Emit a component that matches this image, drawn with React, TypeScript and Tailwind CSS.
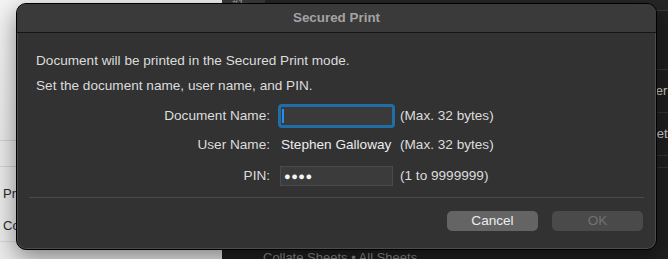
import React from 'react';

const font = { fontFamily: '"Liberation Sans", Arial, sans-serif' };

const Row: React.FC<{ label: string; hint: string; children: React.ReactNode }> = ({ label, hint, children }) => (
  <div className="flex h-[24px] items-center">
    <div className="w-[235px] pr-[1px] text-right text-[13.6px] text-[#dcdcdc]">{label}</div>
    <div className="ml-[9px] w-[113px]">{children}</div>
    <div className="ml-[7px] text-[13.6px] text-[#dcdcdc]">{hint}</div>
  </div>
);

export default function App() {
  return (
    <div className="relative h-[259px] w-[668px] overflow-hidden" style={font}>
      {/* windows behind the sheet */}
      <div className="flex h-full w-full">
        <div className="flex w-[222px] shrink-0 flex-col bg-[#ebebeb] text-[13px] text-[#2a2a2a]">
          <div className="h-[140px] shrink-0 bg-gradient-to-b from-[#f4f4f4] to-[#e9e9e9]" />
          <div className="h-[26px] shrink-0 border-t border-[#d2d2d2]" />
          <div className="flex h-[44px] shrink-0 items-center border-t border-[#d2d2d2] pl-[3px] pt-[10px]">Printer</div>
          <div className="flex h-[31px] shrink-0 items-center pl-[3px]">Copies</div>
          <div className="flex-1 border-t border-[#d6d6d6]" />
        </div>
        <div className="flex min-w-0 flex-1 flex-col overflow-hidden whitespace-nowrap bg-[#1f1f1f] text-[13px] text-[#cfcfcf]">
          <div className="flex h-[11px] shrink-0 border-b border-[#3a3a3a]">
            <div className="w-[43px] bg-[#3b3b3b] pl-[10px] text-[11px] leading-[6px] text-[#aaa]">#1</div>
            <div className="flex-1 bg-[#262626]" />
          </div>
          <div className="h-[59px] shrink-0 border-b border-[#353535]" />
          <div className="flex h-[43px] shrink-0 items-center border-b border-[#353535] pl-[407px]">Printer</div>
          <div className="flex h-[43px] shrink-0 items-center border-b border-[#353535] pl-[426px]">Settings</div>
          <div className="h-[12px] shrink-0 border-b border-[#353535]" />
          <div className="flex-1" />
          <div className="h-[9px] overflow-visible pl-[41px] text-[13px] leading-[16px] text-[#8c8c8c]">
            Collate Sheets • All Sheets
          </div>
        </div>
      </div>

      {/* Secured Print sheet */}
      <div className="absolute left-[16px] top-[3px] flex h-[247px] w-[641px] flex-col overflow-hidden rounded-[10px] border border-black bg-[#323232] shadow-[0_8px_24px_rgba(0,0,0,0.45),inset_0_0_0_1px_rgba(255,255,255,0.13)]">
        <div className="flex h-[29px] shrink-0 items-center justify-center border-b border-[#151515] bg-[#3a3a3a] text-[13.4px] font-bold text-[#a3a3a3]">
          Secured Print
        </div>
        <div className="flex flex-1 flex-col px-[19px] pt-[20px]">
          <p className="h-[16px] text-[13.6px] leading-[16px] text-[#dcdcdc]">Document will be printed in the Secured Print mode.</p>
          <p className="mt-[9px] h-[16px] text-[13.6px] leading-[16px] text-[#dcdcdc]">Set the document name, user name, and PIN.</p>

          <div className="mt-[10px] flex flex-col">
            <Row label="Document Name:" hint="(Max. 32 bytes)">
              <div className="-mx-[2px] flex h-[24px] items-center rounded-[4px] border-[3px] border-[#1f6ea6] bg-[#3a3a3a] pl-[1px]">
                <div className="h-[14px] w-[2px] bg-[#2a8cf0]" />
              </div>
            </Row>
            <div className="mt-[5px]">
              <Row label="User Name:" hint="(Max. 32 bytes)">
                <div className="pl-[1px] text-[13.6px] text-[#ececec]">Stephen Galloway</div>
              </Row>
            </div>
            <div className="mt-[7px]">
              <Row label="PIN:" hint="(1 to 9999999)">
                <div className="flex h-[20px] items-center border border-[#4a4a4a] bg-[#3b3b3b] pl-[3px] text-[11px] tracking-[0.5px] text-[#f4f4f4]">
                  ●●●●
                </div>
              </Row>
            </div>
          </div>

          <div className="-mx-[7px] mt-[9px] h-px bg-[#4a4a4a]" />

          <div className="mt-[13px] flex justify-end gap-[14px]">
            <button className="h-[20px] w-[91px] rounded-[5px] bg-[#646464] text-[13.6px] text-[#ececec]">Cancel</button>
            <button className="-mr-[6px] h-[20px] w-[91px] rounded-[5px] bg-[#4a4a4a] text-[13.6px] text-[#727272]">OK</button>
          </div>
        </div>
      </div>
    </div>
  );
}
